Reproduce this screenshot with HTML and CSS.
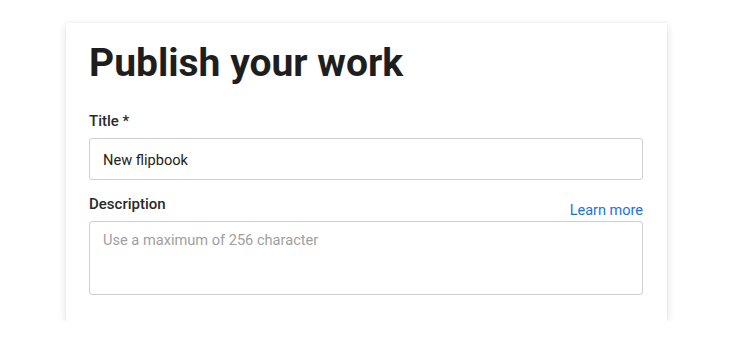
FILE: index.html
```html
<!DOCTYPE html>
<html lang="en">
<head>
<meta charset="utf-8">
<title>Publish your work</title>
<link rel="stylesheet" href="styles.css">
</head>
<body>
<div class="page">
  <section class="card">
    <h1 class="heading">Publish your work</h1>
    <label class="label title-label" for="title">Title *</label>
    <div class="input" id="title">New flipbook</div>
    <div class="desc-row">
      <label class="label desc-label" for="desc">Description</label>
      <a class="link" href="#">Learn more</a>
    </div>
    <div class="textarea" id="desc"><span class="placeholder">Use a maximum of 256 character</span></div>
  </section>
</div>
</body>
</html>
```
FILE: styles.css
```css
html, body {
  margin: 0;
  padding: 0;
  background: #ffffff;
}
body {
  font-family: Roboto, "Liberation Sans", sans-serif;
  color: #202020;
}
.page {
  padding: 23px 63px 0 66px;
}
.card {
  background: #ffffff;
  box-shadow: 0 2px 8px rgba(0, 0, 0, 0.13), 0 0 2px rgba(0, 0, 0, 0.04);
  padding: 16px 24px 26px 23px;
  display: flex;
  flex-direction: column;
}
.heading {
  margin: 0;
  font-size: 39px;
  line-height: 48px;
  font-weight: 700;
  color: #1e1e1e;
}
.label {
  display: block;
  font-size: 15px;
  line-height: 20px;
  font-weight: 500;
  color: #2a2a2a;
}
.title-label {
  margin-top: 24px;
  margin-bottom: 7px;
}
.input {
  border: 1px solid #cfcfcf;
  border-radius: 3px;
  padding: 11px 13px 9px;
  font-size: 14.6px;
  line-height: 20px;
  color: #222222;
}
.desc-row {
  display: flex;
  justify-content: space-between;
  align-items: flex-end;
  margin-top: 14px;
}
.desc-label {
  padding-bottom: 7px;
}
.link {
  font-size: 14.5px;
  line-height: 20px;
  color: #1a73e8;
  text-decoration: none;
  margin-bottom: 0;
}
.textarea {
  border: 1px solid #cfcfcf;
  border-radius: 3px;
  box-sizing: border-box;
  height: 74px;
  padding: 8px 13px;
  font-size: 14.6px;
  line-height: 20px;
}
.placeholder {
  color: #a0a0a0;
}
```
